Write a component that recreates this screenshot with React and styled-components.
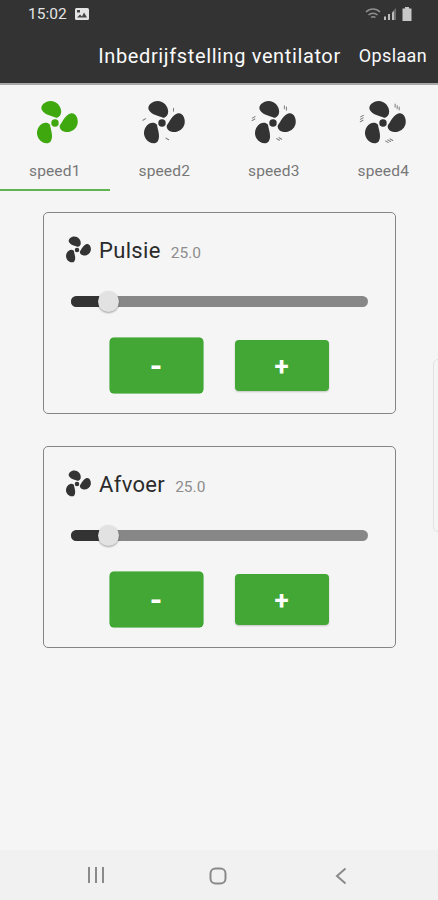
import React from "react";
import styled, { createGlobalStyle } from "styled-components";

const Global = createGlobalStyle`
  html, body { margin: 0; padding: 0; background: #f5f5f5; }
  body { font-family: Roboto, "Liberation Sans", sans-serif; }
  * { box-sizing: border-box; }
`;

const Page = styled.div`
  position: relative; width: 438px; height: 900px; display: flex; flex-direction: column;
  background: #f5f5f5; overflow: hidden;
`;
const Header = styled.header`
  height: 85px; background: #333333; border-bottom: 2px solid #a8a8a8; flex: none;
  display: flex; flex-direction: column;
`;
const StatusBar = styled.div`
  height: 28px; display: flex; align-items: center; padding: 0 26px 0 28px; color: #e4e4e4;
  font-size: 15.5px; gap: 8px;
`;
const StatusIcons = styled.div`
  margin-left: auto; display: flex; align-items: center; gap: 2px;
`;
const Toolbar = styled.div`
  flex: 1; display: flex; align-items: center; justify-content: flex-end; padding: 0 11px 0 0;
  color: #fafafa; gap: 18px;
`;
const Title = styled.div`font-size: 20px; letter-spacing: 0.031em; white-space: nowrap;`;
const Save = styled.div`font-size: 18px; letter-spacing: 0.02em;`;

const Tabs = styled.nav`display: grid; grid-template-columns: repeat(4, 1fr); height: 106px; flex: none;`;
const Tab = styled.div`
  display: flex; flex-direction: column; align-items: center; padding-top: 11px;
  border-bottom: 2px solid ${p => (p.$active ? "#62b351" : "transparent")};
  color: #777; font-size: 15.5px; letter-spacing: 0.01em;
`;
const TabIcon = styled.div`
  height: 52px; display: flex; align-items: center; justify-content: center;
  transform: translate(${p => p.$nudge || 0}px, 1px);
`;
const TabLabel = styled.span`margin-top: 14px;`;

const Cards = styled.main`display: flex; flex-direction: column; gap: 32px; padding: 21px 42px 0 43px;`;
const Card = styled.section`
  height: 202px; border: 1.5px solid #858585; border-radius: 5px; padding: 21px 27px 0 19px;
  display: flex; flex-direction: column;
`;
const CardHead = styled.div`display: flex; align-items: center; height: 32px;`;
const CardName = styled.span`margin-left: 8px; font-size: 22px; color: #2b2b2b; letter-spacing: 0.015em;`;
const CardValue = styled.span`margin-left: 10px; margin-top: 5px; font-size: 15.5px; color: #8d8d8d;`;

const Track = styled.div`
  position: relative; margin: 30px 0 0 8px; height: 11px; border-radius: 6px; background: #878787;
`;
const TrackFill = styled.div`height: 100%; border-radius: 6px 0 0 6px; background: #333;`;
const Thumb = styled.div`
  position: absolute; top: -5px; width: 21px; height: 21px; border-radius: 50%;
  background: #e2e2e2; box-shadow: 0 1px 2px rgba(0,0,0,.35);
`;
const Buttons = styled.div`display: flex; align-items: center; gap: 32px; margin: 31px 0 0 46.500px;`;
const Btn = styled.div`
  width: ${p => p.$w}px; height: ${p => p.$h}px; background: #42a735; border-radius: 4px; color: #fff;
  display: flex; align-items: center; justify-content: center; font-size: ${p => p.$fs}px; font-weight: 700;
  box-shadow: ${p => (p.$raised ? "0 0 0 .5px #1f9c10" : "0 1px 2px rgba(0,0,0,.2)")};
`;

const NavBar = styled.footer`
  position: relative; margin-top: auto; height: 50px; background: #f1f1f1; display: flex; align-items: center; flex: none;
`;
const NavSlot = styled.div`position: absolute; left: ${p => p.$x}px; top: 17px; display: flex;`;
const EdgeHandle = styled.div`
  position: absolute; right: -5px; top: 359px; width: 10px; height: 173px;
  border: 1.5px solid #e2e2e2; border-radius: 5px;
`;

const Blade = "M1-6C-3-8-12-9-15-15-17-20-11-25-5-25 2-25 7-19 7-13 7-9 5-7 2.500-6Z";

const WAVE_SPOTS = {
  1: [[13, -15, 35], [6, 18, 155], [-20, -4, 275]],
  2: [[14, -17, 35], [7, 18, 155], [-22, -5, 275]],
  3: [[16, -18, 35], [7, 20, 155], [-24, -5, 275]],
};

const Fan = ({ size = 44, color = "#333", waves = 0 }) => (
  <svg width={size} height={size} viewBox="-26 -26 52 52" overflow="visible">
    <g fill={color}>
      <path d={Blade} />
      <path d={Blade} transform="rotate(104)" />
      <path d={Blade} transform="rotate(238)" />
      <circle r="4.200" />
    </g>
    {waves > 0 && WAVE_SPOTS[waves].map(([x, y, r], i) => (
      <g key={i} transform={`translate(${x} ${y}) rotate(${r})`} fill="none" stroke="#777" strokeWidth="1.100" strokeLinecap="round">
        {Array.from({ length: waves }).map((_, j) => (
          <path key={j} d={`M${(j - (waves - 1) / 2) * 2.800 - 1} -1.500q1 1.500 2 3`} />
        ))}
      </g>
    ))}
  </svg>
);

const ImageIcon = () => (
  <svg width="14" height="12" viewBox="0 0 14 12">
    <rect width="14" height="12" rx="1.500" fill="#e4e4e4" />
    <path d="M2 9.500l3-3 2 2 2-4 3 5Z" fill="#444" />
    <rect x="2" y="2" width="3" height="2.500" fill="#444" />
  </svg>
);
const Wifi = () => (
  <svg width="17" height="14" viewBox="0 0 17 14" fill="none" stroke="#8f8f8f" strokeWidth="1.500">
    <path d="M1 5c4-4 10-4 14 0" /><path d="M3.500 8c2.500-2.500 6.500-2.500 9 0" /><path d="M6 10.500c1.500-1 3-1 4.500 0" />
  </svg>
);
const Signal = () => (
  <svg width="13" height="12" viewBox="0 0 13 12">
    <path d="M0 12h2V8.500H0ZM4 12h2V6H4Z" fill="#bdbdbd" /><path d="M8 12h4V0L8 4Z" fill="#6d6d6d" />
    <path d="M8 12h2V3L8 5Z" fill="#bdbdbd" />
  </svg>
);
const Battery = () => (
  <svg width="10" height="14" viewBox="0 0 10 14" style={{ marginLeft: 3 }}>
    <path d="M3 0h4v1.500h2.500V14H.5V1.500H3Z" fill="#c8c8c8" />
  </svg>
);

const Recents = () => (
  <svg width="18" height="16" viewBox="0 0 18 16" stroke="#8a8a8a" strokeWidth="2">
    <path d="M2 0v16M9 0v16M16 0v16" />
  </svg>
);
const Home = () => (
  <svg width="18" height="18" viewBox="0 0 18 18" fill="none" stroke="#8a8a8a" strokeWidth="2">
    <rect x="1.500" y="1.500" width="15" height="15" rx="5" />
  </svg>
);
const Back = () => (
  <svg width="12" height="18" viewBox="0 0 12 18" fill="none" stroke="#8a8a8a" strokeWidth="2">
    <path d="M10.500 1.500 2 9l8.500 7.500" />
  </svg>
);

const ControlCard = ({ name, value }) => (
  <Card>
    <CardHead>
      <Fan size={28} />
      <CardName>{name}</CardName>
      <CardValue>{value}</CardValue>
    </CardHead>
    <Track>
      <TrackFill style={{ width: `${(28 / 297) * 100}%` }} />
      <Thumb style={{ left: `${(27 / 297) * 100}%` }} />
    </Track>
    <Buttons>
      <Btn $w={93} $h={55} $fs={32} $raised>-</Btn>
      <Btn $w={94} $h={51} $fs={26}>+</Btn>
    </Buttons>
  </Card>
);

export default function App() {
  return (
    <Page>
      <Global />
      <Header>
        <StatusBar>
          15:02 <ImageIcon />
          <StatusIcons><Wifi /><Signal /><Battery /></StatusIcons>
        </StatusBar>
        <Toolbar>
          <Title>Inbedrijfstelling ventilator</Title>
          <Save>Opslaan</Save>
        </Toolbar>
      </Header>
      <Tabs>
        <Tab $active><TabIcon><Fan size={46} color="#3fa80f" /></TabIcon><TabLabel>speed1</TabLabel></Tab>
        <Tab><TabIcon $nudge={-2}><Fan size={46} waves={1} /></TabIcon><TabLabel>speed2</TabLabel></Tab>
        <Tab><TabIcon $nudge={-1}><Fan size={46} waves={2} /></TabIcon><TabLabel>speed3</TabLabel></Tab>
        <Tab><TabIcon><Fan size={46} waves={3} /></TabIcon><TabLabel>speed4</TabLabel></Tab>
      </Tabs>
      <Cards>
        <ControlCard name="Pulsie" value="25.0" />
        <ControlCard name="Afvoer" value="25.0" />
      </Cards>
      <NavBar>
        <NavSlot $x={87}><Recents /></NavSlot>
        <NavSlot $x={209}><Home /></NavSlot>
        <NavSlot $x={335}><Back /></NavSlot>
      </NavBar>
      <EdgeHandle />
    </Page>
  );
}
